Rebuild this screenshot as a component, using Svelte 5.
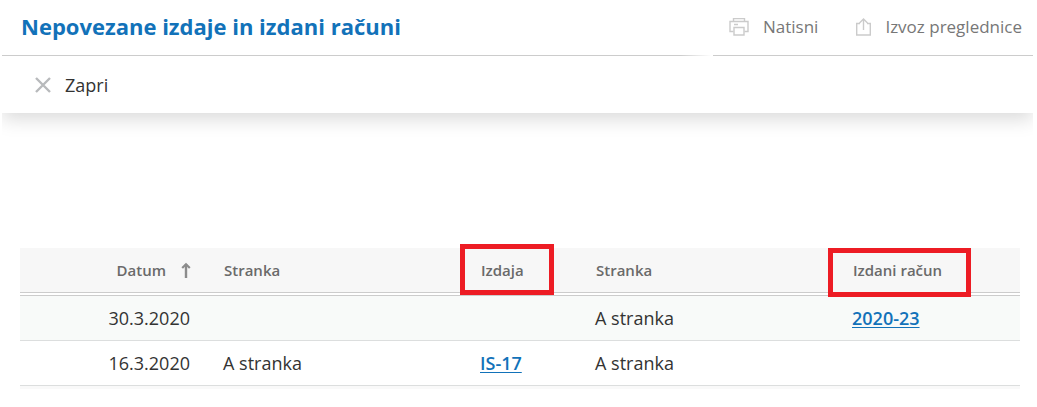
<script>
  const rows = [
    { date: '30.3.2020', issueParty: '', issue: '', invoiceParty: 'A stranka', invoice: '2020-23' },
    { date: '16.3.2020', issueParty: 'A stranka', issue: 'IS-17', invoiceParty: 'A stranka', invoice: '' },
  ];
</script>

<div class="page">
  <header class="panel">
    <div class="top">
      <h1>Nepovezane izdaje in izdani računi</h1>
      <div class="actions">
        <button type="button">
          <svg width="20" height="18" viewBox="0 0 20 18" fill="none" stroke="#cbcbcb" stroke-width="1.4">
            <path d="M4.5 3.5v-3h11v3M4.5 13.5h-3.5v-10h18v10h-3.5M5 6.5h4" />
            <path d="M5 9.5h10v7.5h-10z" />
          </svg>
          Natisni
        </button>
        <button type="button">
          <svg width="15" height="18" viewBox="0 0 15 18" fill="none" stroke="#cbcbcb" stroke-width="1.4">
            <path d="M4 5.5H.7v11.5h13.6v-11.5H11M7.5 12V1M3.5 5l4-4 4 4" />
          </svg>
          Izvoz preglednice
        </button>
      </div>
    </div>
    <div class="toolbar">
      <button type="button" class="close">
        <svg width="16" height="16" viewBox="0 0 16 16" fill="none" stroke="#b8babc" stroke-width="2.4">
          <path d="M1 1l14 14M15 1L1 15" />
        </svg>
        Zapri
      </button>
    </div>
  </header>

  <main>
    <table>
      <colgroup>
        <col class="date" />
        <col class="party" />
        <col class="issue" />
        <col class="party" />
        <col />
      </colgroup>
      <thead>
        <tr>
          <th class="right">
            <span class="sort">
              Datum
              <svg width="10" height="16" viewBox="0 0 10 16" fill="none" stroke="#8c8c8c">
                <path d="M5 2v14" stroke-width="2.4" />
                <path d="M1.2 6L5 2.2 8.8 6" stroke-width="2.2" />
              </svg>
            </span>
          </th>
          <th>Stranka</th>
          <th>Izdaja<span class="mark mark-issue"></span></th>
          <th>Stranka</th>
          <th>Izdani račun<span class="mark mark-invoice"></span></th>
        </tr>
      </thead>
      <tbody>
        {#each rows as row}
          <tr>
            <td class="right">{row.date}</td>
            <td>{row.issueParty}</td>
            <td>{#if row.issue}<a href="#izdaja">{row.issue}</a>{/if}</td>
            <td>{row.invoiceParty}</td>
            <td>{#if row.invoice}<a href="#racun">{row.invoice}</a>{/if}</td>
          </tr>
        {/each}
      </tbody>
    </table>
  </main>
</div>

<style>
  :global(body) {
    margin: 0;
    background: #fff;
  }
  .page {
    padding: 0 4px 0 2px;
    font-family: 'Open Sans', 'Noto Sans', sans-serif;
    font-size: 18px;
    color: #333;
  }
  .panel {
    background: #fff;
    box-shadow: 0 6px 18px rgba(0, 0, 0, 0.15);
    clip-path: inset(0 0 -24px 0);
  }
  .top {
    display: flex;
  }
  h1 {
    flex: 1;
    margin: 0;
    padding: 0 0 2px 19px;
    font-size: 22px;
    line-height: 53px;
    font-weight: 700;
    color: #1272b9;
    border-bottom: 1px solid;
    border-image: linear-gradient(to left, #fff, #ccc 32px) 1;
  }
  .actions {
    display: flex;
    gap: 38px;
    margin-left: 2px;
    padding: 0 11px 2px 16px;
    border-bottom: 1px solid #ccc;
  }
  button {
    display: flex;
    align-items: center;
    gap: 14px;
    padding: 0;
    border: 0;
    background: none;
    font-family: inherit;
    font-size: 17px;
    color: #777;
    cursor: pointer;
  }
  .toolbar {
    padding-left: 33px;
  }
  .close {
    height: 57px;
    font-size: 18px;
    color: #333;
  }
  main {
    padding: 135px 13px 0 18px;
  }
  table {
    width: 100%;
    table-layout: fixed;
    border-spacing: 0;
    border-bottom: 3px solid #f9f9f9;
  }
  .date {
    width: 187px;
  }
  .party {
    width: 257px;
  }
  .issue {
    width: 115px;
  }
  th,
  td {
    height: 44px;
    padding: 0 17px 0 16px;
    text-align: left;
    white-space: nowrap;
  }
  th {
    position: relative;
    padding: 0 16px 0 17px;
    font-size: 15px;
    font-weight: 600;
    color: #6a6a6a;
    background: #f7f7f7;
    background-clip: padding-box;
    border-bottom: 4px double #ccc;
  }
  td {
    border-bottom: 1px solid #dcdede;
  }
  tbody tr:first-child {
    background: #f8faf9;
  }
  .right {
    text-align: right;
  }
  .sort {
    display: flex;
    justify-content: flex-end;
    align-items: center;
    gap: 15px;
  }
  a {
    font-weight: 600;
    color: #1272b9;
    text-underline-offset: 2px;
  }
  .mark {
    position: absolute;
    box-sizing: border-box;
    border: 5px solid #ed1c24;
  }
  .mark-issue {
    top: -4px;
    left: -4px;
    width: 94px;
    height: 51px;
  }
  .mark-invoice {
    top: 0;
    left: -8px;
    width: 143px;
    height: 49px;
  }
</style>
